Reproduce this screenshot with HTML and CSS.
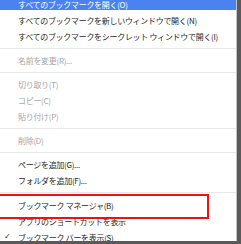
FILE: index.html
```html
<!DOCTYPE html>
<html lang="ja">
<head>
    <meta charset="UTF-8">
    <title>ブックマーク メニュー</title>
    <link rel="stylesheet" href="styles.css">
</head>
<body>
    <div class="shot">
        <div class="menu">
            <ul class="menu-list">
                <li class="menu-item active">すべてのブックマークを開く(O)</li>
                <li class="menu-item">すべてのブックマークを新しいウィンドウで開く(N)</li>
                <li class="menu-item">すべてのブックマークをシークレット ウィンドウで開く(I)</li>
                <li class="menu-sep"></li>
                <li class="menu-item disabled">名前を変更(R)...</li>
                <li class="menu-sep"></li>
                <li class="menu-item disabled">切り取り(T)</li>
                <li class="menu-item disabled">コピー(C)</li>
                <li class="menu-item disabled">貼り付け(P)</li>
                <li class="menu-sep"></li>
                <li class="menu-item disabled">削除(D)</li>
                <li class="menu-sep"></li>
                <li class="menu-item">ページを追加(G)...</li>
                <li class="menu-item">フォルダを追加(F)...</li>
                <li class="menu-sep wide"></li>
                <li class="menu-item">ブックマーク マネージャ(B)</li>
                <li class="menu-item">アプリのショートカットを表示</li>
                <li class="menu-item checked">ブックマーク バーを表示(S)</li>
            </ul>
            <!-- red annotation box round the manager entry -->
            <div class="mark"></div>
        </div>
    </div>
</body>
</html>
```

FILE: styles.css
```css
body {
    margin: 0;
    font-family: "Noto Sans CJK JP", "Liberation Sans", sans-serif;
    font-size: 8px;
}

.shot {
    width: 241px;
    height: 244px;
    background: #5a5a5a;
    overflow: hidden;
}

.menu {
    position: relative;
    width: 236px;
    height: 241px;
    background: #fff;
    border-right: 1px solid #c4c4c4;
    overflow: hidden;
}

.menu-list {
    list-style: none;
    margin: -6px 0 0;
    padding: 0;
}

.menu-item {
    position: relative;
    height: 16px;
    padding: 5px 0 0 18px;
    box-sizing: border-box;
    line-height: 11px;
    letter-spacing: -0.3px;
    color: #262626;
    white-space: nowrap;
}

.menu-item.active {
    background: #4a83f0;
    color: #fff;
}

.menu-item.disabled {
    color: #a6a6a6;
}

.menu-item.checked::before {
    content: "✓";
    position: absolute;
    left: 4px;
    top: 4px;
    font-family: "DejaVu Sans", sans-serif;
    font-size: 8px;
}

.menu-sep {
    height: 1px;
    margin: 6px 0 1px;
    background: #e8e8e8;
}

.menu-sep.wide {
    margin-bottom: 2px;
}

.mark {
    position: absolute;
    left: -6px;
    top: 194px;
    width: 211px;
    height: 21px;
    border: 2px solid #ee1111;
}
```
